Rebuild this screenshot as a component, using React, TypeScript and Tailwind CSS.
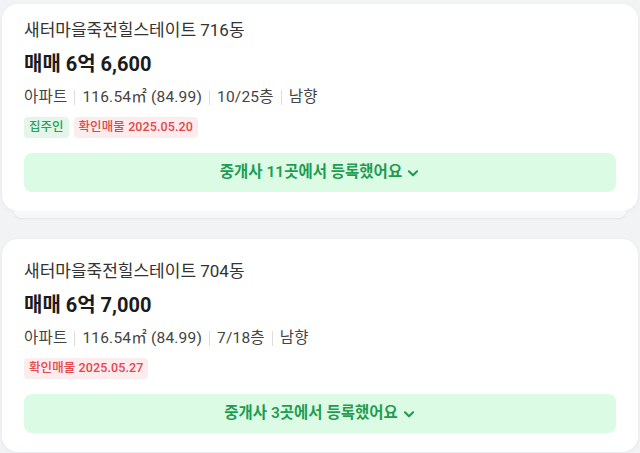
import React from 'react';

type Listing = {
  title: string;
  price: string;
  area: string;
  floor: string;
  facing: string;
  owner?: boolean;
  verified: string;
  brokers: number;
};

const listings: Listing[] = [
  { title: '새터마을죽전힐스테이트 716동', price: '매매 6억 6,600', area: '116.54㎡ (84.99)', floor: '10/25층', facing: '남향', owner: true, verified: '2025.05.20', brokers: 11 },
  { title: '새터마을죽전힐스테이트 704동', price: '매매 6억 7,000', area: '116.54㎡ (84.99)', floor: '7/18층', facing: '남향', verified: '2025.05.27', brokers: 3 },
];

const Sep = () => <span className="mx-[7px] inline-block h-[15px] w-px bg-[#dedede]" />;

const Chevron = () => (
  <svg width="14" height="14" viewBox="0 0 24 24" fill="none" stroke="currentColor" strokeWidth="3.6" strokeLinecap="round" strokeLinejoin="round" className="ml-[4px]">
    <path d="M5 9l7 7 7-7" />
  </svg>
);

const Card = ({ item, top }: { item: Listing; top: string }) => (
  <div className={`rounded-[16px] bg-white px-[22px] pb-[19px] shadow-[0_1px_4px_rgba(0,0,0,0.06)] ${top}`}>
    <div className="text-[17px] leading-[24px] text-[#333]">{item.title}</div>
    <div className="mt-[8px] text-[20px] font-bold leading-[28px] text-[#1b1b1b]">{item.price}</div>
    <div className="mt-[8px] flex items-center text-[15.5px] leading-[22px] tracking-[0.2px] text-[#444]">
      <span>아파트</span>
      <Sep />
      <span>{item.area}</span>
      <Sep />
      <span>{item.floor}</span>
      <Sep />
      <span>{item.facing}</span>
    </div>
    <div className="mt-[9px] flex gap-[5px]">
      {item.owner && (
        <span className="flex h-[21px] items-center rounded-[4px] bg-[#e3f6e9] px-[5px] text-[12.5px] font-medium text-[#26a35b]">집주인</span>
      )}
      <span className="flex h-[21px] items-center rounded-[4px] bg-[#fdeced] px-[5px] text-[12.5px] font-medium tracking-[0.1px] text-[#e2474c]">확인매물 {item.verified}</span>
    </div>
    <button className="mt-[15px] flex h-[39px] w-full items-center justify-center rounded-[8px] bg-[#dcfbe5] text-[15.5px] font-semibold text-[#1f9c52]">
      중개사 {item.brokers}곳에서 등록했어요
      <Chevron />
    </button>
  </div>
);

export default function App() {
  return (
    <div className="h-[453px] w-[640px] overflow-hidden bg-[#f2f3f5] px-[2px] pt-[4px]" style={{ fontFamily: 'Roboto, "Noto Sans CJK KR", sans-serif' }}>
      <Card item={listings[0]} top="pt-[14px]" />
      <div className="mx-[12px] h-[7px] rounded-b-[12px] bg-[#f8f8f9] shadow-[0_1px_2px_rgba(0,0,0,0.06)]" />
      <div className="mt-[21px]">
        <Card item={listings[1]} top="pt-[20px]" />
      </div>
    </div>
  );
}
